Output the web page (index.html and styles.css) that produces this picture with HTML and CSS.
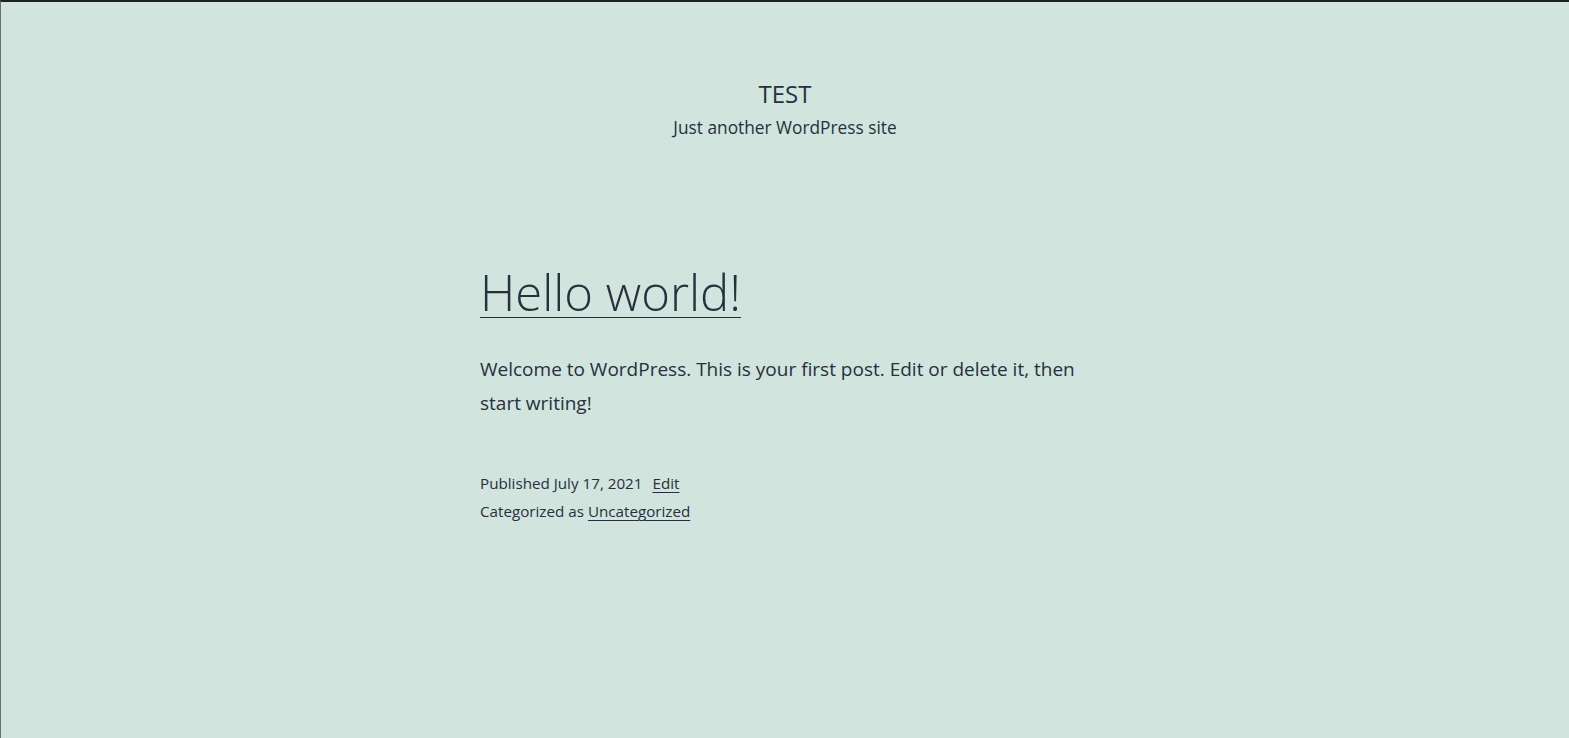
FILE: index.html
```html
<!DOCTYPE html>
<html lang="en">
<head>
<meta charset="utf-8">
<title>TEST – Just another WordPress site</title>
<link rel="stylesheet" href="styles.css">
</head>
<body>
<div class="frame">
  <header class="site-header">
    <p class="site-title">TEST</p>
    <p class="site-description">Just another WordPress site</p>
  </header>
  <main class="site-main">
    <article class="post">
      <h2 class="entry-title"><a href="#">Hello world!</a></h2>
      <div class="entry-content">
        <p>Welcome to WordPress. This is your first post. Edit or delete it, then start writing!</p>
      </div>
      <footer class="entry-footer">
        <div class="posted-on">Published July 17, 2021 <a class="edit-link" href="#">Edit</a></div>
        <div class="cat-links">Categorized as <a href="#">Uncategorized</a></div>
      </footer>
    </article>
  </main>
</div>
</body>
</html>
```

FILE: styles.css
```css
html, body {
  margin: 0;
  padding: 0;
  height: 100%;
}
body {
  background: #d1e4dd;
  color: #28303d;
  font-family: "Open Sans", "Noto Sans", sans-serif;
}
.frame {
  box-sizing: border-box;
  min-height: 100%;
  border-top: 2px solid #1d2125;
  border-left: 1px solid #6d7170;
}
.site-header {
  padding-top: 76px;
  text-align: center;
}
.site-title {
  margin: 0;
  font-size: 24px;
  line-height: 32px;
  text-transform: uppercase;
}
.site-description {
  margin: 3px 0 0;
  font-size: 17.3px;
  line-height: 30px;
}
.site-main {
  width: 610px;
  margin: 0 auto;
  padding-top: 119px;
}
.entry-title {
  margin: 0;
  font-size: 49px;
  line-height: 60px;
  font-weight: 300;
}
.entry-title a {
  color: inherit;
  text-decoration: underline;
  text-decoration-thickness: 1px;
  text-underline-offset: 6px;
}
.entry-content p {
  margin: 30px 0 0;
  font-size: 19px;
  line-height: 34px;
}
.entry-footer {
  margin-top: 49px;
  font-size: 15.2px;
  line-height: 28px;
}
.entry-footer a {
  color: inherit;
  text-decoration: underline;
  text-decoration-thickness: 1px;
  text-underline-offset: 3px;
}
.edit-link {
  margin-left: 6px;
}
```
